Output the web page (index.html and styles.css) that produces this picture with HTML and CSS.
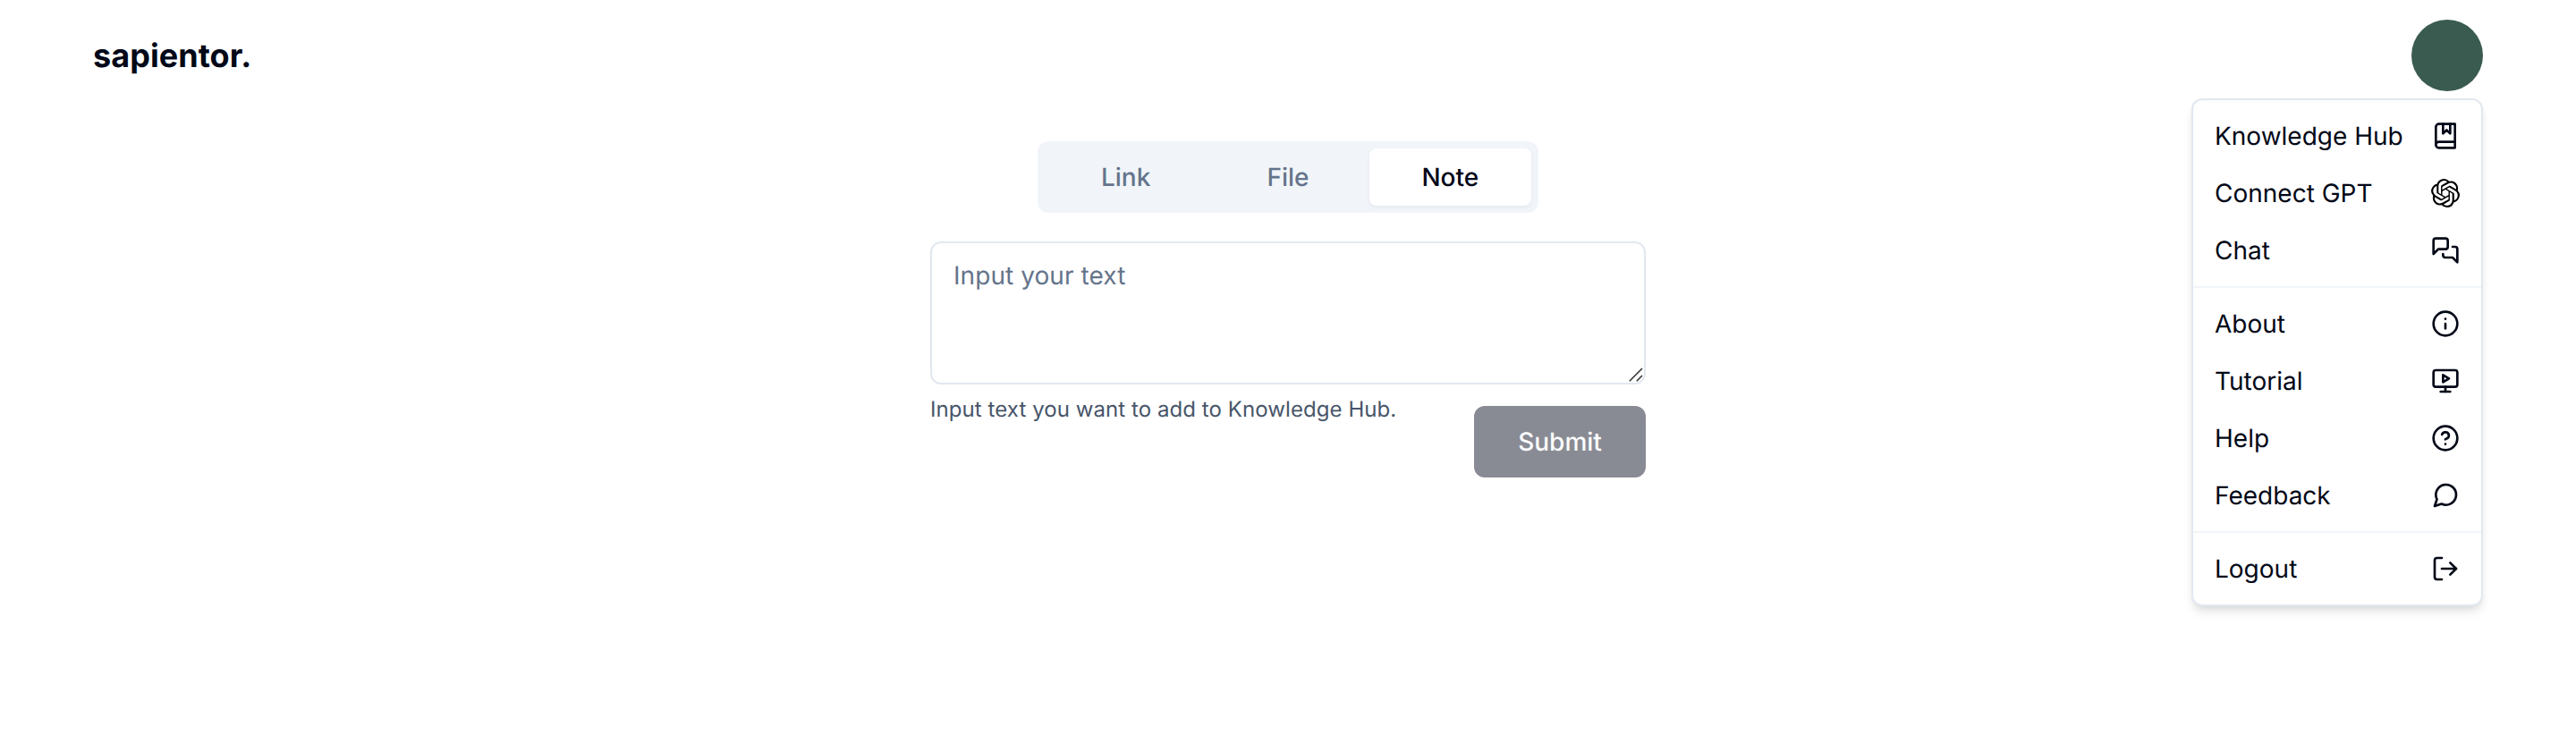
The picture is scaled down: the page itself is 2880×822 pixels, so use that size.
FILE: index.html
```html
<!DOCTYPE html>
<html lang="en">
<head>
<meta charset="utf-8">
<title>sapientor.</title>
<link rel="stylesheet" href="styles.css">
</head>
<body>
<header class="header">
  <a class="brand">sapientor.</a>
  <div class="account">
    <button class="avatar" aria-label="Account"></button>
    <nav class="menu">
      <div class="group">
        <a class="item">Knowledge Hub
          <svg class="icon" viewBox="0 0 24 24"><path d="M4 19.5v-15A2.5 2.5 0 0 1 6.5 2H20v20H6.5a2.5 2.5 0 0 1 0-5H20"/><path d="M10 2v8l3-3 3 3V2"/></svg></a>
        <a class="item">Connect GPT
          <svg class="icon icon-solid" viewBox="0 0 24 24"><path d="M22.2819 9.8211a5.9847 5.9847 0 0 0-.5157-4.9108 6.0462 6.0462 0 0 0-6.5098-2.9A6.0651 6.0651 0 0 0 4.9807 4.1818a5.9847 5.9847 0 0 0-3.9977 2.9 6.0462 6.0462 0 0 0 .7427 7.0966 5.98 5.98 0 0 0 .511 4.9107 6.051 6.051 0 0 0 6.5146 2.9001A5.9847 5.9847 0 0 0 13.2599 24a6.0557 6.0557 0 0 0 5.7718-4.2058 5.9894 5.9894 0 0 0 3.9977-2.9001 6.0557 6.0557 0 0 0-.7475-7.0729zm-9.022 12.6081a4.4755 4.4755 0 0 1-2.8764-1.0408l.1419-.0804 4.7783-2.7582a.7948.7948 0 0 0 .3927-.6813v-6.7369l2.02 1.1686a.071.071 0 0 1 .038.052v5.5826a4.504 4.504 0 0 1-4.4945 4.4944zm-9.6607-4.1254a4.4708 4.4708 0 0 1-.5346-3.0137l.142.0852 4.783 2.7582a.7712.7712 0 0 0 .7806 0l5.8428-3.3685v2.3324a.0804.0804 0 0 1-.0332.0615L9.74 19.9502a4.4992 4.4992 0 0 1-6.1408-1.6464zM2.3408 7.8956a4.485 4.485 0 0 1 2.3655-1.9728V11.6a.7664.7664 0 0 0 .3879.6765l5.8144 3.3543-2.0201 1.1685a.0757.0757 0 0 1-.071 0l-4.8303-2.7865A4.504 4.504 0 0 1 2.3408 7.872zm16.5963 3.8558L13.1038 8.364 15.1192 7.2a.0757.0757 0 0 1 .071 0l4.8303 2.7913a4.4944 4.4944 0 0 1-.6765 8.1042v-5.6772a.79.79 0 0 0-.407-.667zm2.0107-3.0231l-.142-.0852-4.7735-2.7818a.7759.7759 0 0 0-.7854 0L9.409 9.2297V6.8974a.0662.0662 0 0 1 .0284-.0615l4.8303-2.7866a4.4992 4.4992 0 0 1 6.6802 4.66zM8.3065 12.863l-2.02-1.1638a.0804.0804 0 0 1-.038-.0567V6.0742a4.4992 4.4992 0 0 1 7.3757-3.4537l-.142.0805L8.704 5.459a.7948.7948 0 0 0-.3927.6813zm1.0976-2.3654l2.602-1.4998 2.6069 1.4998v2.9994l-2.5974 1.4997-2.6067-1.4997Z"/></svg></a>
        <a class="item">Chat
          <svg class="icon" viewBox="0 0 24 24"><path d="M14 9a2 2 0 0 1-2 2H6l-4 4V4c0-1.1.9-2 2-2h8a2 2 0 0 1 2 2v5Z"/><path d="M18 9h2a2 2 0 0 1 2 2v11l-4-4h-6a2 2 0 0 1-2-2v-1"/></svg></a>
      </div>
      <div class="group">
        <a class="item">About
          <svg class="icon" viewBox="0 0 24 24"><circle cx="12" cy="12" r="10"/><path d="M12 16v-4"/><path d="M12 8h.01"/></svg></a>
        <a class="item">Tutorial
          <svg class="icon" viewBox="0 0 24 24"><path d="m10 7 5 3-5 3Z"/><rect width="20" height="14" x="2" y="3" rx="2"/><path d="M12 17v4"/><path d="M8 21h8"/></svg></a>
        <a class="item">Help
          <svg class="icon" viewBox="0 0 24 24"><circle cx="12" cy="12" r="10"/><path d="M9.09 9a3 3 0 0 1 5.83 1c0 2-3 3-3 3"/><path d="M12 17h.01"/></svg></a>
        <a class="item">Feedback
          <svg class="icon" viewBox="0 0 24 24"><path d="m3 21 1.9-5.7a8.5 8.5 0 1 1 3.8 3.8z"/></svg></a>
      </div>
      <div class="group">
        <a class="item">Logout
          <svg class="icon" viewBox="0 0 24 24"><path d="M9 21H5a2 2 0 0 1-2-2V5a2 2 0 0 1 2-2h4"/><path d="m16 17 5-5-5-5"/><path d="M21 12H9"/></svg></a>
      </div>
    </nav>
  </div>
</header>
<main class="main">
  <div class="tabs">
    <button class="tab">Link</button>
    <button class="tab">File</button>
    <button class="tab tab-active">Note</button>
  </div>
  <form class="form">
    <div class="field">
      <textarea class="input" placeholder="Input your text"></textarea>
      <svg class="grip" viewBox="0 0 16 16"><path d="M.8 15.2 15 1M8.8 15.2 15 9"/></svg>
    </div>
    <div class="form-footer">
      <p class="hint">Input text you want to add to Knowledge Hub.</p>
      <button class="submit" type="button" disabled>Submit</button>
    </div>
  </form>
</main>
</body>
</html>
```
FILE: styles.css
```css
* { box-sizing: border-box; }

body {
  margin: 0;
  min-height: 100vh;
  background: #fff;
  color: #020817;
  font: 400 28px/40px Inter, sans-serif;
  text-rendering: geometricPrecision;
}

button, textarea { text-rendering: inherit; }
button { border: 0; padding: 0; font: inherit; }

.header {
  display: flex;
  align-items: center;
  justify-content: space-between;
  height: 124px;
  padding: 0 104px;
}

.brand { font-size: 36px; line-height: 56px; font-weight: 700; letter-spacing: .05px; }

.account { position: relative; display: flex; }

.avatar {
  width: 80px;
  height: 80px;
  border-radius: 50%;
  background: #3a5b4f;
}

/* Dropdown opens below the avatar, over the page */
.menu {
  position: absolute;
  top: calc(100% + 8px);
  right: 0;
  width: 326px;
  border: 2px solid #e2e8f0;
  border-radius: 12px;
  background: #fff;
  box-shadow: 0 8px 12px -2px rgb(0 0 0 / .1), 0 4px 8px -4px rgb(0 0 0 / .1);
}

.group { padding: 8px; }
.group + .group { border-top: 2px solid #f1f5f9; }

.item {
  display: flex;
  align-items: center;
  justify-content: space-between;
  height: 64px;
  padding: 0 16px;
  white-space: nowrap;
}

.icon {
  width: 32px;
  height: 32px;
  fill: none;
  stroke: currentColor;
  stroke-width: 2;
  stroke-linecap: round;
  stroke-linejoin: round;
}

.icon-solid { fill: #000; stroke: none; }

.main {
  display: flex;
  flex-direction: column;
  align-items: center;
  gap: 32px;
  padding-top: 34px;
}

.tabs {
  display: grid;
  grid-template-columns: repeat(3, 1fr);
  width: 560px;
  height: 80px;
  padding: 8px;
  border-radius: 12px;
  background: #f1f5f9;
}

.tab {
  border-radius: 8px;
  background: none;
  color: #64748b;
  font-weight: 500;
}

.tab-active {
  background: #fff;
  color: #020817;
  box-shadow: 0 2px 4px rgb(0 0 0 / .05);
}

.form { width: 800px; }

.field { position: relative; }

.input {
  display: block;
  width: 100%;
  height: 160px;
  padding: 16px 24px;
  border: 2px solid #e2e8f0;
  border-radius: 12px;
  background: #fff;
  font: inherit;
  letter-spacing: .07px;
  resize: none;
}

.input::placeholder { color: #64748b; }

/* Resize handle in the textarea's corner */
.grip {
  position: absolute;
  right: 3px;
  bottom: 3px;
  width: 16px;
  height: 16px;
  fill: none;
  stroke: #333;
  stroke-width: 1.6;
}

.form-footer {
  display: flex;
  align-items: flex-start;
  justify-content: space-between;
}

.hint {
  margin: 12px 0 0;
  color: #475569;
  font-size: 24px;
  line-height: 32px;
  letter-spacing: .07px;
}

.submit {
  width: 192px;
  height: 80px;
  margin-top: 24px;
  border-radius: 12px;
  background: #898b94;
  color: #fbfcfd;
  font-weight: 500;
}
```
